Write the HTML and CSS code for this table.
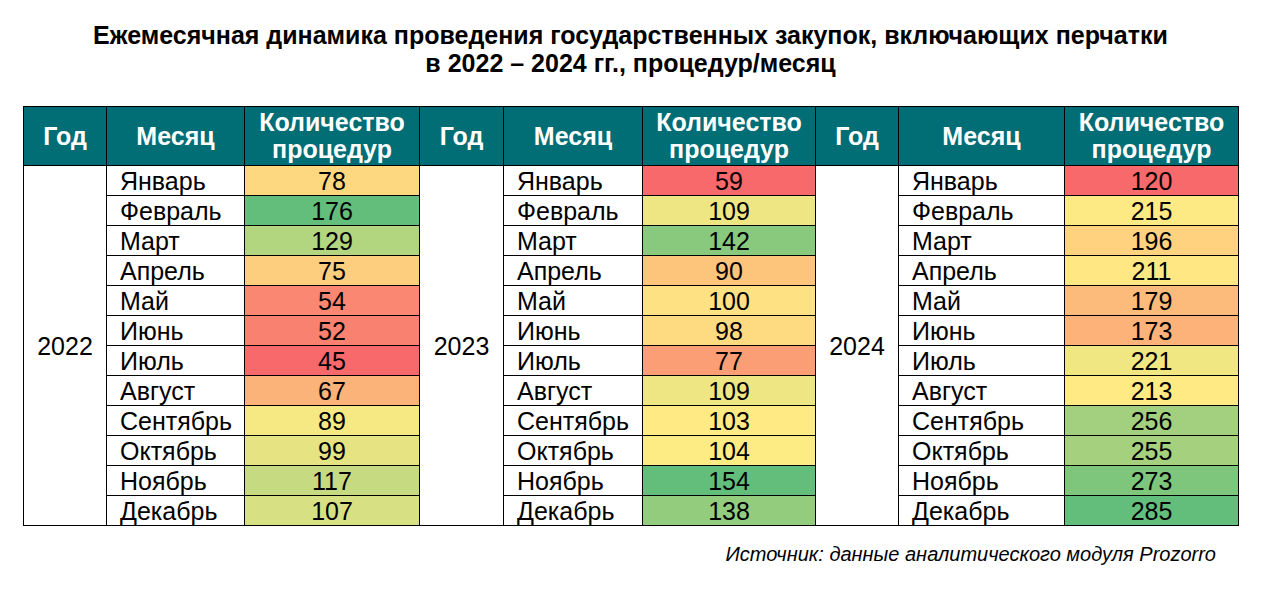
FILE: index.html
```html
<!DOCTYPE html>
<html lang="ru">
<head>
<meta charset="utf-8">
<link rel="stylesheet" href="styles.css">
</head>
<body>
<div class="page">
  <h1 class="title">Ежемесячная динамика проведения государственных закупок, включающих перчатки<br>в 2022 – 2024 гг., процедур/месяц</h1>
  <table class="grid">
    <colgroup>
      <col class="c-year"><col class="c-month"><col class="c-val">
      <col class="c-year2"><col class="c-month2"><col class="c-val2">
      <col class="c-year"><col class="c-month3"><col class="c-val3">
    </colgroup>
    <thead>
      <tr>
        <th>Год</th><th>Месяц</th><th>Количество<br>процедур</th>
        <th>Год</th><th>Месяц</th><th>Количество<br>процедур</th>
        <th>Год</th><th>Месяц</th><th>Количество<br>процедур</th>
      </tr>
    </thead>
    <tbody>
      <tr>
        <td class="year" rowspan="12">2022</td><td class="month">Январь</td><td class="val" style="background:#FED880">78</td>
        <td class="year" rowspan="12">2023</td><td class="month">Январь</td><td class="val" style="background:#F8696B">59</td>
        <td class="year" rowspan="12">2024</td><td class="month">Январь</td><td class="val" style="background:#F8696B">120</td>
      </tr>
      <tr>
        <td class="month">Февраль</td><td class="val" style="background:#63BE7B">176</td>
        <td class="month">Февраль</td><td class="val" style="background:#EEE683">109</td>
        <td class="month">Февраль</td><td class="val" style="background:#FDEA84">215</td>
      </tr>
      <tr>
        <td class="month">Март</td><td class="val" style="background:#B2D580">129</td>
        <td class="month">Март</td><td class="val" style="background:#88C97D">142</td>
        <td class="month">Март</td><td class="val" style="background:#FED27F">196</td>
      </tr>
      <tr>
        <td class="month">Апрель</td><td class="val" style="background:#FDCE7E">75</td>
        <td class="month">Апрель</td><td class="val" style="background:#FDC47C">90</td>
        <td class="month">Апрель</td><td class="val" style="background:#FFE783">211</td>
      </tr>
      <tr>
        <td class="month">Май</td><td class="val" style="background:#FA8771">54</td>
        <td class="month">Май</td><td class="val" style="background:#FEE182">100</td>
        <td class="month">Май</td><td class="val" style="background:#FCBB7B">179</td>
      </tr>
      <tr>
        <td class="month">Июнь</td><td class="val" style="background:#F9816F">52</td>
        <td class="month">Июнь</td><td class="val" style="background:#FEDB81">98</td>
        <td class="month">Июнь</td><td class="val" style="background:#FCB279">173</td>
      </tr>
      <tr>
        <td class="month">Июль</td><td class="val" style="background:#F8696B">45</td>
        <td class="month">Июль</td><td class="val" style="background:#FB9E75">77</td>
        <td class="month">Июль</td><td class="val" style="background:#F0E783">221</td>
      </tr>
      <tr>
        <td class="month">Август</td><td class="val" style="background:#FCB379">67</td>
        <td class="month">Август</td><td class="val" style="background:#EEE683">109</td>
        <td class="month">Август</td><td class="val" style="background:#FFEA84">213</td>
      </tr>
      <tr>
        <td class="month">Сентябрь</td><td class="val" style="background:#F6E883">89</td>
        <td class="month">Сентябрь</td><td class="val" style="background:#FFEA84">103</td>
        <td class="month">Сентябрь</td><td class="val" style="background:#A3D07F">256</td>
      </tr>
      <tr>
        <td class="month">Октябрь</td><td class="val" style="background:#E5E382">99</td>
        <td class="month">Октябрь</td><td class="val" style="background:#FDEB84">104</td>
        <td class="month">Октябрь</td><td class="val" style="background:#A5D17F">255</td>
      </tr>
      <tr>
        <td class="month">Ноябрь</td><td class="val" style="background:#C6DB81">117</td>
        <td class="month">Ноябрь</td><td class="val" style="background:#63BE7B">154</td>
        <td class="month">Ноябрь</td><td class="val" style="background:#7DC67C">273</td>
      </tr>
      <tr>
        <td class="month">Декабрь</td><td class="val" style="background:#D7E082">107</td>
        <td class="month">Декабрь</td><td class="val" style="background:#94CC7E">138</td>
        <td class="month">Декабрь</td><td class="val" style="background:#63BE7B">285</td>
      </tr>
    </tbody>
  </table>
  <p class="source">Источник: данные аналитического модуля Prozorro</p>
</div>
</body>
</html>
```

FILE: styles.css
```css
html, body {
  margin: 0;
  padding: 0;
  background: #ffffff;
}

body {
  font-family: "Liberation Sans", Arial, sans-serif;
  color: #000000;
}

.page {
  width: 1215px;
  margin-left: 23px;
  padding-top: 21px;
}

.title {
  margin: 0;
  font-family: "Liberation Sans Narrow", "Liberation Sans", Arial, sans-serif;
  font-size: 25px;
  font-weight: bold;
  line-height: 28px;
  text-align: center;
}

.grid {
  margin-top: 29px;
  width: 1215px;
  table-layout: fixed;
  border-collapse: collapse;
  font-size: 25px;
}

.c-year { width: 83px; }
.c-month { width: 138px; }
.c-val { width: 175px; }
.c-year2 { width: 84px; }
.c-month2 { width: 139px; }
.c-val2 { width: 173px; }
.c-month3 { width: 166px; }
.c-val3 { width: 174px; }

.grid th {
  background: #016D74;
  color: #ffffff;
  font-weight: bold;
  font-size: 25px;
  line-height: 27px;
  height: 58px;
  padding: 0;
  border: 1px solid #000000;
  text-align: center;
  vertical-align: middle;
}

.grid td {
  border: 1px solid #000000;
  padding: 1px 0 0 0;
  height: 28px;
  line-height: 28px;
}

.grid td.year {
  text-align: center;
  vertical-align: middle;
}

.grid td.month {
  text-align: left;
  padding-left: 13px;
}

.grid td.val {
  text-align: center;
}

.source {
  margin: 17px 22px 0 0;
  font-size: 20px;
  font-style: italic;
  text-align: right;
}
```
